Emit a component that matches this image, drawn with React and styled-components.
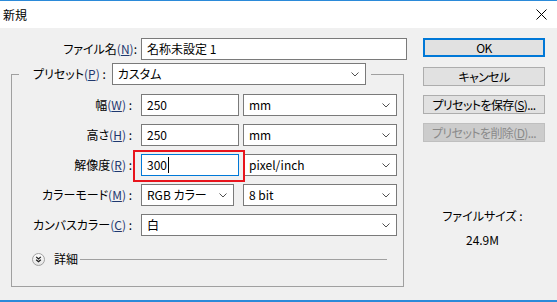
import styled, { createGlobalStyle } from 'styled-components';

const GlobalStyle = createGlobalStyle`
  * { box-sizing: border-box; }
  body {
    margin: 0;
    font-family: "Noto Sans CJK JP", "Noto Sans", sans-serif;
    font-size: 12px;
    font-feature-settings: "palt";
    color: #000;
  }
`

const Window = styled.div`
  width: 557px;
  height: 302px;
  display: flex;
  flex-direction: column;
  background: #f0f0f0;
  border-top: 1px solid #2b8ad9;
  border-bottom: 2px solid #2b8ad9;
`

const TitleBar = styled.div`
  height: 27px;
  background: #fff;
  display: flex;
  align-items: center;
  justify-content: space-between;
  padding: 0 10px 0 3px;
  line-height: 16px;
`

const Body = styled.div`
  flex: 1;
  display: flex;
  gap: 16px;
  padding-top: 10px;
`

const LeftCol = styled.div`
  width: 407px;
  display: flex;
  flex-direction: column;
`

const FileRow = styled.div`
  display: grid;
  grid-template-columns: 137px 1fr;
  column-gap: 4px;
  align-items: center;
`

const Label = styled.div`
  text-align: right;
  white-space: nowrap;
  line-height: 16px;
  padding-right: ${p => p.$pad || 0}px;
`

const Key = styled.span`
  color: #1f386f;
  u { text-decoration: underline; text-underline-offset: 1px; }
`

const Field = styled.div`
  position: relative;
  height: 22px;
  width: ${p => (p.$w ? `${p.$w}px` : 'auto')};
  background: #fff;
  border: 1px solid ${p => (p.$focus ? '#0078d7' : '#7a7a7a')};
  padding: 0 5px;
  display: flex;
  align-items: center;
  line-height: 16px;
  white-space: nowrap;
`

const Caret = styled.span`
  display: inline-block;
  width: 1px;
  height: 16px;
  background: #000;
  margin-left: 1px;
`

const Marker = styled.div`
  position: absolute;
  top: -5px;
  left: -9px;
  right: -7px;
  bottom: -7px;
  border: 2px solid #e8141c;
  pointer-events: none;
`

const SelectBox = styled.div`
  height: 22px;
  width: ${p => (p.$w ? `${p.$w}px` : 'auto')};
  grid-column: ${p => p.$span || 'auto'};
  background: #fff;
  border: 1px solid #7a7a7a;
  padding: 0 6px 0 5px;
  display: flex;
  align-items: center;
  justify-content: space-between;
  line-height: 16px;
  white-space: nowrap;
`

const Group = styled.fieldset`
  margin: 3px 0 0 11px;
  width: 393px;
  padding: 0 0 19px;
  border: 1px solid #a0a0a0;
`

const Legend = styled.legend`
  margin-left: 7px;
  padding: 0 5px 0 14px;
`

const LegendInner = styled.div`
  display: flex;
  align-items: center;
  gap: 6px;
`

const Rows = styled.div`
  display: flex;
  flex-direction: column;
  gap: 8px;
  padding-top: 9px;
`

const Row = styled.div`
  display: grid;
  grid-template-columns: 125px 98px 154px;
  column-gap: 4px;
  align-items: center;
`

const DetailRow = styled.div`
  display: flex;
  align-items: center;
  height: 16px;
  margin-top: 15px;
  padding-left: 20px;
  padding-right: 16px;
  line-height: 16px;
`

const DetailText = styled.span`
  margin-left: 9px;
  margin-right: 2px;
`

const Divider = styled.div`
  flex: 1;
  height: 1px;
  background: #a0a0a0;
`

const RightCol = styled.div`
  width: 122px;
  display: flex;
  flex-direction: column;
  gap: 9px;
`

const Button = styled.div`
  height: 19px;
  display: flex;
  align-items: center;
  justify-content: center;
  line-height: 16px;
  letter-spacing: -0.6px;
  white-space: nowrap;
  background: ${p => (p.$disabled ? '#cccccc' : '#e1e1e1')};
  color: ${p => (p.$disabled ? '#8a8a8a' : '#000')};
  border: ${p => (p.$primary ? '2px solid #0078d7' : `1px solid ${p.$disabled ? '#bfbfbf' : '#adadad'}`)};
  margin-bottom: ${p => (p.$primary ? 1 : 0)}px;
`

const FileSize = styled.div`
  margin-top: 53px;
  text-align: center;
  line-height: 24px;
  padding-right: 3px;
`

const Chevron = () => (
  <svg width="8" height="5" viewBox="0 0 8 5">
    <polyline points="0.5,0.5 4,4 7.5,0.5" fill="none" stroke="#505050" strokeWidth="1" />
  </svg>
)

const CloseIcon = () => (
  <svg width="11" height="11" viewBox="0 0 11 11">
    <path d="M0.5 0.5 L10.5 10.5 M10.5 0.5 L0.5 10.5" stroke="#000" strokeWidth="1" />
  </svg>
)

const DetailIcon = () => (
  <svg width="13" height="13" viewBox="0 0 13 13">
    <defs>
      <linearGradient id="dg" x1="0" y1="0" x2="0" y2="1">
        <stop offset="0" stopColor="#ffffff" />
        <stop offset="1" stopColor="#e2e2e2" />
      </linearGradient>
    </defs>
    <circle cx="6.5" cy="6.5" r="6" fill="url(#dg)" stroke="#a0a0a0" />
    <polyline points="4.2,3.9 6.5,6 8.8,3.9" fill="none" stroke="#1a1a1a" strokeWidth="1.2" />
    <polyline points="4.2,6.7 6.5,8.8 8.8,6.7" fill="none" stroke="#1a1a1a" strokeWidth="1.2" />
  </svg>
)

const Select = ({ children, w, span }) => (
  <SelectBox $w={w} $span={span}>
    <span>{children}</span>
    <Chevron />
  </SelectBox>
)

const KeyLabel = ({ text, k, sep = ':', pad }) => (
  <Label $pad={pad}>
    {text}<Key>(<u>{k}</u>)</Key>{sep}
  </Label>
)

const App = () => {
  return (
    <>
      <GlobalStyle />
      <Window>
        <TitleBar>
          <span>新規</span>
          <CloseIcon />
        </TitleBar>
        <Body>
          <LeftCol>
            <FileRow>
              <KeyLabel text="ファイル名" k="N" />
              <Field>名称未設定 1</Field>
            </FileRow>
            <Group>
              <Legend>
                <LegendInner>
                  <KeyLabel text="プリセット" k="P" sep=" :" />
                  <Select w={254}>カスタム</Select>
                </LegendInner>
              </Legend>
              <Rows>
                <Row>
                  <KeyLabel text="幅" k="W" sep=" :" pad={5} />
                  <Field>250</Field>
                  <Select>mm</Select>
                </Row>
                <Row>
                  <KeyLabel text="高さ" k="H" sep=" :" pad={5} />
                  <Field>250</Field>
                  <Select>mm</Select>
                </Row>
                <Row>
                  <KeyLabel text="解像度" k="R" sep=" :" pad={5} />
                  <Field $focus>
                    300<Caret />
                    <Marker />
                  </Field>
                  <Select>pixel/inch</Select>
                </Row>
                <Row>
                  <KeyLabel text="カラーモード" k="M" sep=" :" pad={5} />
                  <Select w={93}>RGB カラー</Select>
                  <Select>8 bit</Select>
                </Row>
                <Row>
                  <KeyLabel text="カンバスカラー" k="C" sep=" :" pad={5} />
                  <Select span="2 / 4">白</Select>
                </Row>
              </Rows>
              <DetailRow>
                <DetailIcon />
                <DetailText>詳細</DetailText>
                <Divider />
              </DetailRow>
            </Group>
          </LeftCol>
          <RightCol>
            <Button $primary>OK</Button>
            <Button>キャンセル</Button>
            <Button>プリセットを保存(<u>S</u>)...</Button>
            <Button $disabled>プリセットを削除(<u>D</u>)...</Button>
            <FileSize>
              <div>ファイルサイズ :</div>
              <div>24.9M</div>
            </FileSize>
          </RightCol>
        </Body>
      </Window>
    </>
  )
}

export default App
